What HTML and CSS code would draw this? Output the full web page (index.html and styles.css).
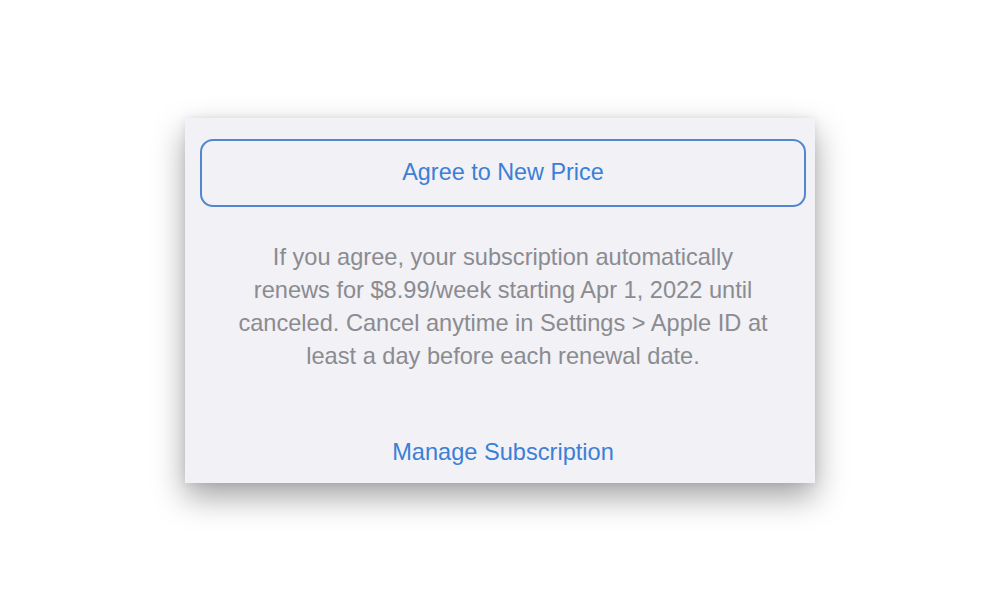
FILE: index.html
```html
<!DOCTYPE html>
<html>
<head>
<meta charset="utf-8">
<link rel="stylesheet" href="styles.css">
</head>
<body>
<div class="card">
  <div class="btn">Agree to New Price</div>
  <p class="note">If you agree, your subscription automatically renews for $8.99/week starting Apr 1, 2022 until canceled. Cancel anytime in Settings &gt; Apple ID at least a day before each renewal date.</p>
  <div class="manage">Manage Subscription</div>
</div>
</body>
</html>
```
FILE: styles.css
```css
html, body {
  margin: 0;
  padding: 0;
  background: #ffffff;
}
body {
  width: 1000px;
  height: 600px;
  display: flex;
  align-items: center;
  justify-content: center;
  font-family: "Liberation Sans", Arial, sans-serif;
}
.card {
  width: 630px;
  height: 365px;
  box-sizing: border-box;
  background: #f1f1f6;
  padding: 21px 9px 0 15px;
  display: flex;
  flex-direction: column;
  box-shadow: 0 14px 30px rgba(0,0,0,0.36), 0 0 8px rgba(0,0,0,0.08);
}
.btn {
  height: 68px;
  box-sizing: border-box;
  border: 2px solid #5287d0;
  border-radius: 13px;
  display: flex;
  align-items: center;
  justify-content: center;
  color: #3b7fd6;
  font-size: 23.4px;
}
.note {
  width: 536px;
  margin: 34px auto 0 auto;
  text-align: center;
  color: #8b8b90;
  font-size: 23.6px;
  line-height: 33px;
}
.manage {
  margin-top: 63px;
  text-align: center;
  color: #3b7fd6;
  font-size: 23.6px;
  line-height: 33px;
}
```
